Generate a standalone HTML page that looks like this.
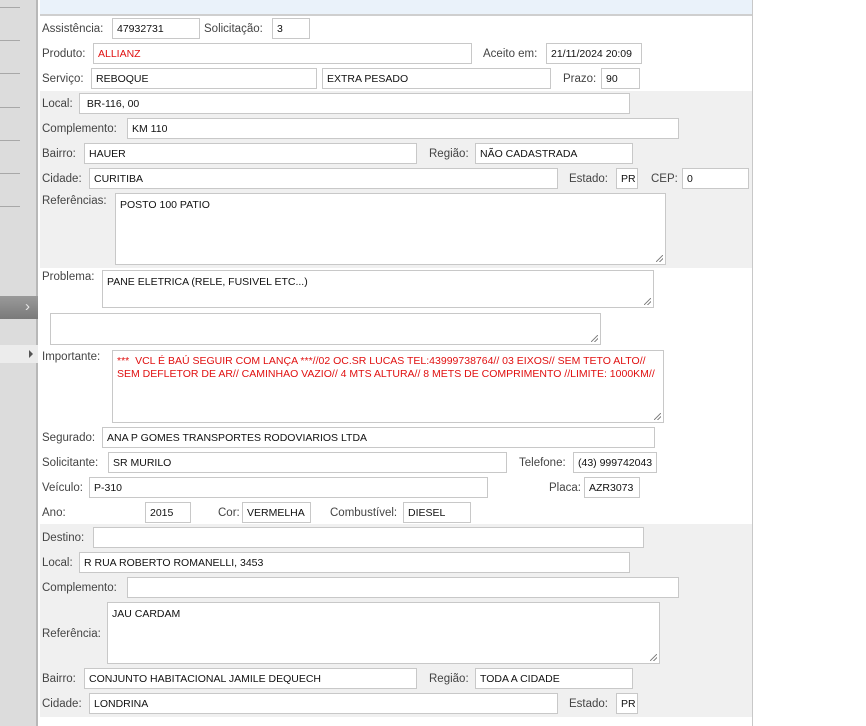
<!DOCTYPE html>
<html><head><meta charset="utf-8"><style>
*{margin:0;padding:0;box-sizing:border-box}
body{width:866px;height:726px;background:#fff;position:relative;overflow:hidden;font-family:"Liberation Sans",Arial,sans-serif}
.sb{position:absolute;left:0;top:0;width:38px;height:726px;background:#dcdcdc;border-right:2px solid #b8b8b8}
.sl{position:absolute;left:0;width:20px;height:1px;background:#a8a8a8}
.top{position:absolute;left:40px;top:0;width:712px;height:16px;background:#eaf2fa;border-bottom:2px solid #cfcfcf}
.pr{position:absolute;left:752px;top:0;width:1px;height:726px;background:#c8c8c8}
.g{position:absolute;left:40px;width:712px;background:#f0f0f0}
.l{position:absolute;font-size:11.5px;color:#444;line-height:14px;white-space:nowrap}
.i{position:absolute;height:21px;background:#fff;border:1px solid #c8c8c8;font-size:10.5px;color:#111;padding:4px 0 0 4px;white-space:nowrap;overflow:hidden}
.t{height:auto;white-space:normal;line-height:13px}
.r{color:#e01010}
.rz{position:absolute;right:2px;bottom:2px;width:7px;height:7px;background:linear-gradient(135deg,transparent 45%,#888 45%,#888 55%,transparent 55%,transparent 70%,#888 70%,#888 80%,transparent 80%)}
</style></head><body>
<div class="sb"></div>
<div class="sl" style="top:7px"></div><div class="sl" style="top:40px"></div><div class="sl" style="top:73px"></div><div class="sl" style="top:107px"></div><div class="sl" style="top:140px"></div><div class="sl" style="top:173px"></div><div class="sl" style="top:206px"></div>
<div style="position:absolute;left:0;top:296px;width:38px;height:23px;background:linear-gradient(#9a9a9a,#7a7a7a);color:#e8e8e8;font-size:15px;text-align:right;padding-right:8px;line-height:22px">&#8250;</div>
<div style="position:absolute;left:0;top:345px;width:38px;height:18px;background:#ececec"></div>
<div style="position:absolute;left:29px;top:350px;width:0;height:0;border-left:4px solid #555;border-top:4px solid transparent;border-bottom:4px solid transparent"></div>
<div class="top"></div>
<div class="pr"></div>
<div class="g" style="top:91px;height:177px"></div>
<div class="g" style="top:524px;height:193px"></div>

<div class="l" style="left:42px;top:22px">Assistência:</div><div class="i" style="left:112px;top:18px;width:88px">47932731</div>
<div class="l" style="left:204px;top:22px">Solicitação:</div><div class="i" style="left:272px;top:18px;width:38px">3</div>
<div class="l" style="left:42px;top:47px">Produto:</div><div class="i r" style="left:93px;top:43px;width:379px">ALLIANZ</div>
<div class="l" style="left:483px;top:47px">Aceito em:</div><div class="i" style="left:546px;top:43px;width:96px">21/11/2024 20:09</div>
<div class="l" style="left:42px;top:72px">Serviço:</div><div class="i" style="left:91px;top:68px;width:226px">REBOQUE</div>
<div class="i" style="left:322px;top:68px;width:229px">EXTRA PESADO</div>
<div class="l" style="left:563px;top:72px">Prazo:</div><div class="i" style="left:601px;top:68px;width:39px">90</div>

<div class="l" style="left:42px;top:97px">Local:</div><div class="i" style="left:79px;top:93px;width:551px">&nbsp;BR-116, 00</div>
<div class="l" style="left:42px;top:122px">Complemento:</div><div class="i" style="left:127px;top:118px;width:552px">KM 110</div>
<div class="l" style="left:42px;top:147px">Bairro:</div><div class="i" style="left:84px;top:143px;width:333px">HAUER</div>
<div class="l" style="left:429px;top:147px">Região:</div><div class="i" style="left:475px;top:143px;width:158px">NÃO CADASTRADA</div>
<div class="l" style="left:42px;top:172px">Cidade:</div><div class="i" style="left:89px;top:168px;width:469px">CURITIBA</div>
<div class="l" style="left:569px;top:172px">Estado:</div><div class="i" style="left:616px;top:168px;width:22px">PR</div>
<div class="l" style="left:651px;top:172px">CEP:</div><div class="i" style="left:682px;top:168px;width:67px">0</div>
<div class="l" style="left:42px;top:194px">Referências:</div><div class="i t" style="left:115px;top:193px;width:551px;height:72px;padding-top:5px">POSTO 100 PATIO<div class="rz"></div></div>

<div class="l" style="left:42px;top:270px">Problema:</div><div class="i t" style="left:102px;top:270px;width:552px;height:38px;padding-top:5px">PANE ELETRICA (RELE, FUSIVEL ETC...)<div class="rz"></div></div>
<div class="i t" style="left:50px;top:313px;width:551px;height:32px"><div class="rz"></div></div>
<div class="l" style="left:42px;top:350px">Importante:</div><div class="i t r" style="left:112px;top:350px;width:552px;height:73px;padding-top:4px">***&nbsp; VCL É BAÚ SEGUIR COM LANÇA ***//02 OC.SR LUCAS TEL:43999738764// 03 EIXOS// SEM TETO ALTO// SEM DEFLETOR DE AR// CAMINHAO VAZIO// 4 MTS ALTURA// 8 METS DE COMPRIMENTO //LIMITE: 1000KM//<div class="rz"></div></div>

<div class="l" style="left:42px;top:431px">Segurado:</div><div class="i" style="left:102px;top:427px;width:553px">ANA P GOMES TRANSPORTES RODOVIARIOS LTDA</div>
<div class="l" style="left:42px;top:456px">Solicitante:</div><div class="i" style="left:108px;top:452px;width:399px">SR MURILO</div>
<div class="l" style="left:519px;top:456px">Telefone:</div><div class="i" style="left:573px;top:452px;width:84px">(43) 999742043</div>
<div class="l" style="left:42px;top:481px">Veículo:</div><div class="i" style="left:89px;top:477px;width:399px">P-310</div>
<div class="l" style="left:549px;top:481px">Placa:</div><div class="i" style="left:584px;top:477px;width:56px">AZR3073</div>
<div class="l" style="left:42px;top:506px">Ano:</div><div class="i" style="left:145px;top:502px;width:46px">2015</div>
<div class="l" style="left:218px;top:506px">Cor:</div><div class="i" style="left:242px;top:502px;width:69px">VERMELHA</div>
<div class="l" style="left:330px;top:506px">Combustível:</div><div class="i" style="left:403px;top:502px;width:68px">DIESEL</div>

<div class="l" style="left:42px;top:531px">Destino:</div><div class="i" style="left:93px;top:527px;width:551px"></div>
<div class="l" style="left:42px;top:556px">Local:</div><div class="i" style="left:79px;top:552px;width:551px">R RUA ROBERTO ROMANELLI, 3453</div>
<div class="l" style="left:42px;top:581px">Complemento:</div><div class="i" style="left:127px;top:577px;width:552px"></div>
<div class="l" style="left:42px;top:627px">Referência:</div><div class="i t" style="left:107px;top:602px;width:553px;height:62px;padding-top:5px">JAU CARDAM<div class="rz"></div></div>
<div class="l" style="left:42px;top:672px">Bairro:</div><div class="i" style="left:84px;top:668px;width:333px">CONJUNTO HABITACIONAL JAMILE DEQUECH</div>
<div class="l" style="left:429px;top:672px">Região:</div><div class="i" style="left:475px;top:668px;width:158px">TODA A CIDADE</div>
<div class="l" style="left:42px;top:697px">Cidade:</div><div class="i" style="left:89px;top:693px;width:469px">LONDRINA</div>
<div class="l" style="left:569px;top:697px">Estado:</div><div class="i" style="left:616px;top:693px;width:22px">PR</div>
</body></html>
